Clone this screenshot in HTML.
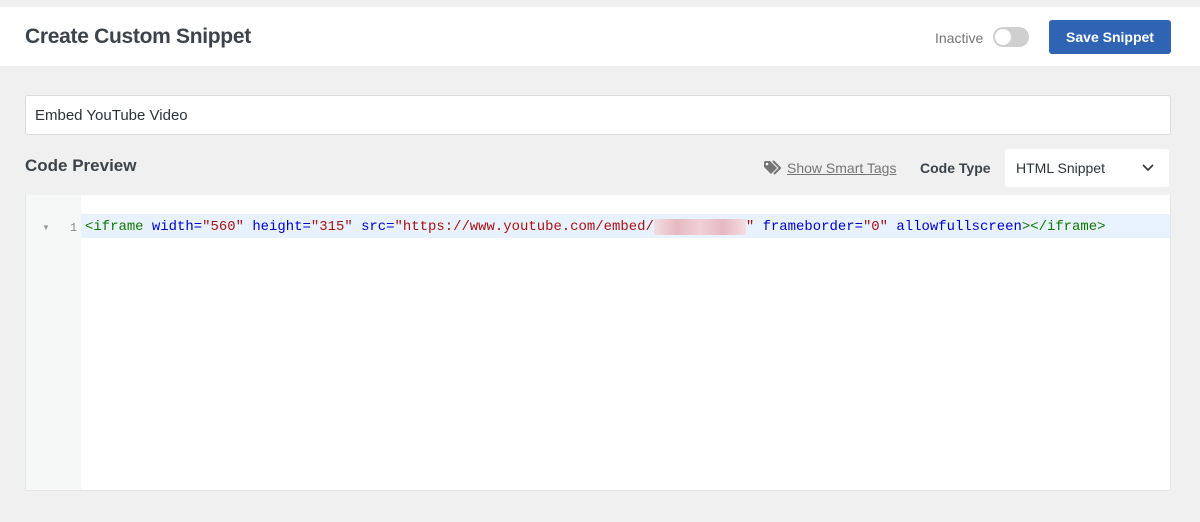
<!DOCTYPE html>
<html><head><style>
body{margin:0;width:1200px;height:522px;background:#f0f0f1;font-family:"Liberation Sans",sans-serif;position:relative;overflow:hidden}
.hdr{position:absolute;top:7px;left:0;width:1200px;height:59px;background:#fff}
.title{position:absolute;left:25px;top:18px;font-size:21px;font-weight:bold;color:#3c434a;letter-spacing:-0.3px}
.inact{position:absolute;left:935px;top:23px;font-size:14px;color:#757575}
.tog{position:absolute;left:993px;top:20px;width:36px;height:20px;border-radius:10px;background:#cfcfcf}
.tog::after{content:"";position:absolute;left:2px;top:2px;width:16px;height:16px;border-radius:50%;background:#fff}
.btn{position:absolute;left:1049px;top:13px;width:122px;height:34px;background:#2f64b5;border-radius:3px;color:#fff;font-weight:bold;font-size:14px;text-align:center;line-height:34px}
.inp{position:absolute;left:25px;top:95px;width:1144px;height:38px;background:#fff;border:1px solid #dcdcde;border-radius:3px;font-size:15px;color:#2c3338;line-height:40px;text-indent:9px}
.cp{position:absolute;left:25px;top:156px;font-size:17px;font-weight:bold;color:#3c434a}
.tags{position:absolute;left:763px;top:160px;font-size:14px;color:#757575;text-decoration:underline}
.ct{position:absolute;left:920px;top:160px;font-size:14px;font-weight:bold;color:#3c434a}
.sel{position:absolute;left:1005px;top:149px;width:164px;height:38px;background:#fff;border-radius:3px;font-size:14px;color:#2c3338;line-height:38px;text-indent:11px}
.code{position:absolute;left:25px;top:195px;width:1144px;height:295px;background:#fff;border:1px solid #e5e5e5;border-top:none}
.gut{position:absolute;left:0;top:0;width:55px;height:295px;background:#f6f7f7}
.hl{position:absolute;left:55px;top:19px;right:0;height:24px;background:#e8f2fe}
.line{position:absolute;left:59px;top:24px;font-family:"Liberation Mono",monospace;font-size:13.95px;white-space:pre;color:#00c}
.ln{position:absolute;left:44px;top:26px;font-family:"Liberation Mono",monospace;font-size:12px;color:#888}
.arr{position:absolute;left:16px;top:28px;font-size:8px;color:#999}
.g{color:#170}.r{color:#a11}
</style></head><body>
<div class="hdr"><div class="title">Create Custom Snippet</div>
<div class="inact">Inactive</div><div class="tog"></div>
<div class="btn">Save Snippet</div></div>
<div class="inp">Embed YouTube Video</div>
<div class="cp">Code Preview</div>
<svg style="position:absolute;left:763px;top:160px" width="22" height="17" viewBox="0 0 22 17"><path d="M1 2 L1 7 L8 14 L14 8 L7 1 L2 1Z" fill="#757575"/><circle cx="4" cy="4" r="1.3" fill="#fff"/><path d="M10 1 L17 8 L11 14" stroke="#757575" stroke-width="2" fill="none"/></svg>
<div class="tags" style="left:787px">Show Smart Tags</div>
<div class="ct">Code Type</div>
<div class="sel">HTML Snippet<svg style="position:absolute;left:137px;top:15px" width="12" height="8" viewBox="0 0 12 8"><path d="M1 1L6 6L11 1" stroke="#333" stroke-width="1.6" fill="none"/></svg></div>
<div class="code"><div class="gut"><div class="arr">▼</div><div class="ln">1</div></div><div class="hl"></div>
<div class="line"><span class="g">&lt;iframe</span> width=<span class="r">"560"</span> height=<span class="r">"315"</span> src=<span class="r">"https://www.youtube.com/embed/<span style="background:linear-gradient(90deg,#f3dde0,#e6b9c0,#f0d0d5,#e6b9c0,#f3dde0);color:transparent">XXXXXXXXXXX</span>"</span> frameborder=<span class="r">"0"</span> allowfullscreen<span class="g">&gt;&lt;/iframe&gt;</span></div></div>
</body></html>
